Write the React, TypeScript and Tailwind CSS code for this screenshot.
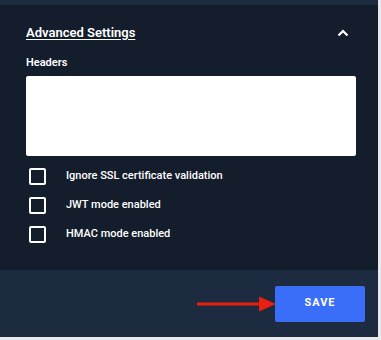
import React from "react";

function Checkbox({ label }: { label: string }) {
  return (
    <div className="flex items-center h-[17px]">
      <div className="ml-[3px] w-[17px] h-[17px] rounded-[2px] border-2 border-white box-border" />
      <span className="ml-[20px] text-[11px] font-medium text-white">{label}</span>
    </div>
  );
}

export default function App() {
  return (
    <div className="w-[381px] h-[340px] bg-[#e9eaec] font-['Roboto',sans-serif]">
      <div className="w-[378px] h-[337px] flex flex-col">
        <div className="h-[5px] bg-[#1c2b40]" />
        <div className="flex-1 bg-[#131d2b] px-[26px] pt-[20px]">
          <div className="flex items-center justify-between h-[14px]">
            <span className="text-[13px] font-semibold text-white underline underline-offset-[2px] leading-none">
              Advanced Settings
            </span>
            <svg width="12" height="8" viewBox="0 0 12 8" className="mr-[3px] mt-[1px]">
              <path d="M1.5 6.5 L6 2 L10.5 6.5" stroke="white" strokeWidth="2.2" fill="none" />
            </svg>
          </div>
          <div className="mt-[18px] text-[11px] font-semibold text-white leading-none">Headers</div>
          <div className="mt-[8px] w-[330px] h-[80px] bg-white rounded-[2px]" />
          <div className="mt-[12px] flex flex-col gap-[12px]">
            <Checkbox label="Ignore SSL certificate validation" />
            <Checkbox label="JWT mode enabled" />
            <Checkbox label="HMAC mode enabled" />
          </div>
        </div>
        <div className="h-[67px] bg-[#1c2b40] flex items-center justify-end pr-[13px]">
          <svg width="80" height="16" viewBox="0 0 80 16" className="mr-[-2px]">
            <line x1="0" y1="8" x2="66" y2="8" stroke="#e8200f" strokeWidth="3" />
            <polygon points="62,0.5 79,8 62,15.5" fill="#e8200f" />
          </svg>
          <button className="w-[90px] h-[36px] bg-[#3b6ef8] rounded-[2px] text-white text-[11px] font-bold tracking-[1px]">
            SAVE
          </button>
        </div>
      </div>
    </div>
  );
}
